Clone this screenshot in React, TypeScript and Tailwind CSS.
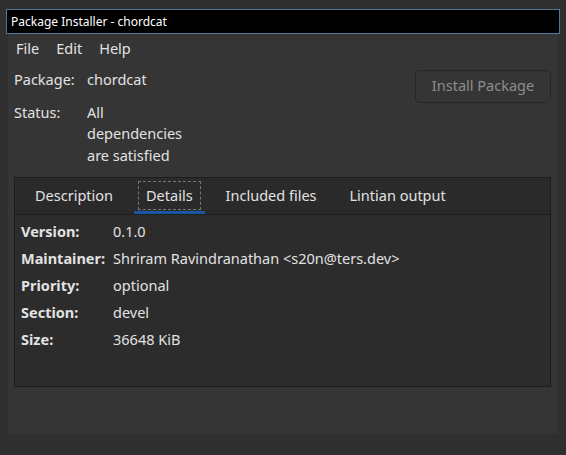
import React from "react";

const details: [string, string][] = [
  ["Version:", "0.1.0"],
  ["Maintainer:", "Shriram Ravindranathan <s20n@ters.dev>"],
  ["Priority:", "optional"],
  ["Section:", "devel"],
  ["Size:", "36648 KiB"],
];

const tabs = ["Description", "Details", "Included files", "Lintian output"];

export default function App() {
  return (
    <div
      className="min-h-[455px] bg-[#2f2f2f] px-[6px] pt-[9px] text-[14.5px] text-[#e2e2e2]"
      style={{ fontFamily: '"Noto Sans", "Open Sans", sans-serif' }}
    >
      {/* title bar */}
      <div className="flex h-[25px] items-center border border-[#4f7797] bg-black pl-[4px] text-[12px] text-white">
        Package Installer - chordcat
      </div>

      <div className="mx-[2px] flex h-[400px] flex-col bg-[#353535]">
        {/* menu */}
        <div className="flex h-[29px] items-center gap-[17px] pl-[8px]">
          <span>File</span>
          <span>Edit</span>
          <span>Help</span>
        </div>

        <div className="flex flex-col pl-[6px] pr-[7px]">
          <div className="flex items-start justify-between pt-[6px]">
            <div className="flex flex-col gap-[11px] leading-[21.5px]">
              <div className="flex">
                <span className="w-[73px]">Package:</span>
                <span>chordcat</span>
              </div>
              <div className="flex">
                <span className="w-[73px]">Status:</span>
                <span className="w-[102px]">All dependencies are satisfied</span>
              </div>
            </div>
            <button
              disabled
              className="mt-[1px] flex h-[33px] w-[136px] items-center justify-center rounded-[5px] border border-[#272727] bg-[#353535] pb-[1px] text-[#8d8d8d]"
            >
              Install Package
            </button>
          </div>

          {/* notebook */}
          <div className="mt-[11px] flex h-[210px] flex-col border border-[#1d1d1d] bg-[#2c2c2c]">
            <div className="flex h-[37px] gap-[9px] border-b border-[#1d1d1d] bg-[#2a2a2a] pl-[8px]">
              {tabs.map((t) => {
                const active = t === "Details";
                return (
                  <div
                    key={t}
                    className={`flex flex-col justify-end px-[4px] ${active ? "border-b-[3px] border-[#1a57a3]" : "border-b-[3px] border-transparent"}`}
                  >
                    <div
                      className={`mb-[1px] flex h-[29px] items-center px-[7px] pt-[1px] ${active ? "border border-dashed border-[#777777]" : "border border-transparent"}`}
                    >
                      {t}
                    </div>
                  </div>
                );
              })}
            </div>
            <div className="flex flex-col pl-[6px] pt-[3px]">
              {details.map(([k, v]) => (
                <div key={k} className="flex h-[27px] items-center">
                  <span className="w-[92px] font-bold">{k}</span>
                  <span>{v}</span>
                </div>
              ))}
            </div>
          </div>
        </div>
      </div>
    </div>
  );
}
